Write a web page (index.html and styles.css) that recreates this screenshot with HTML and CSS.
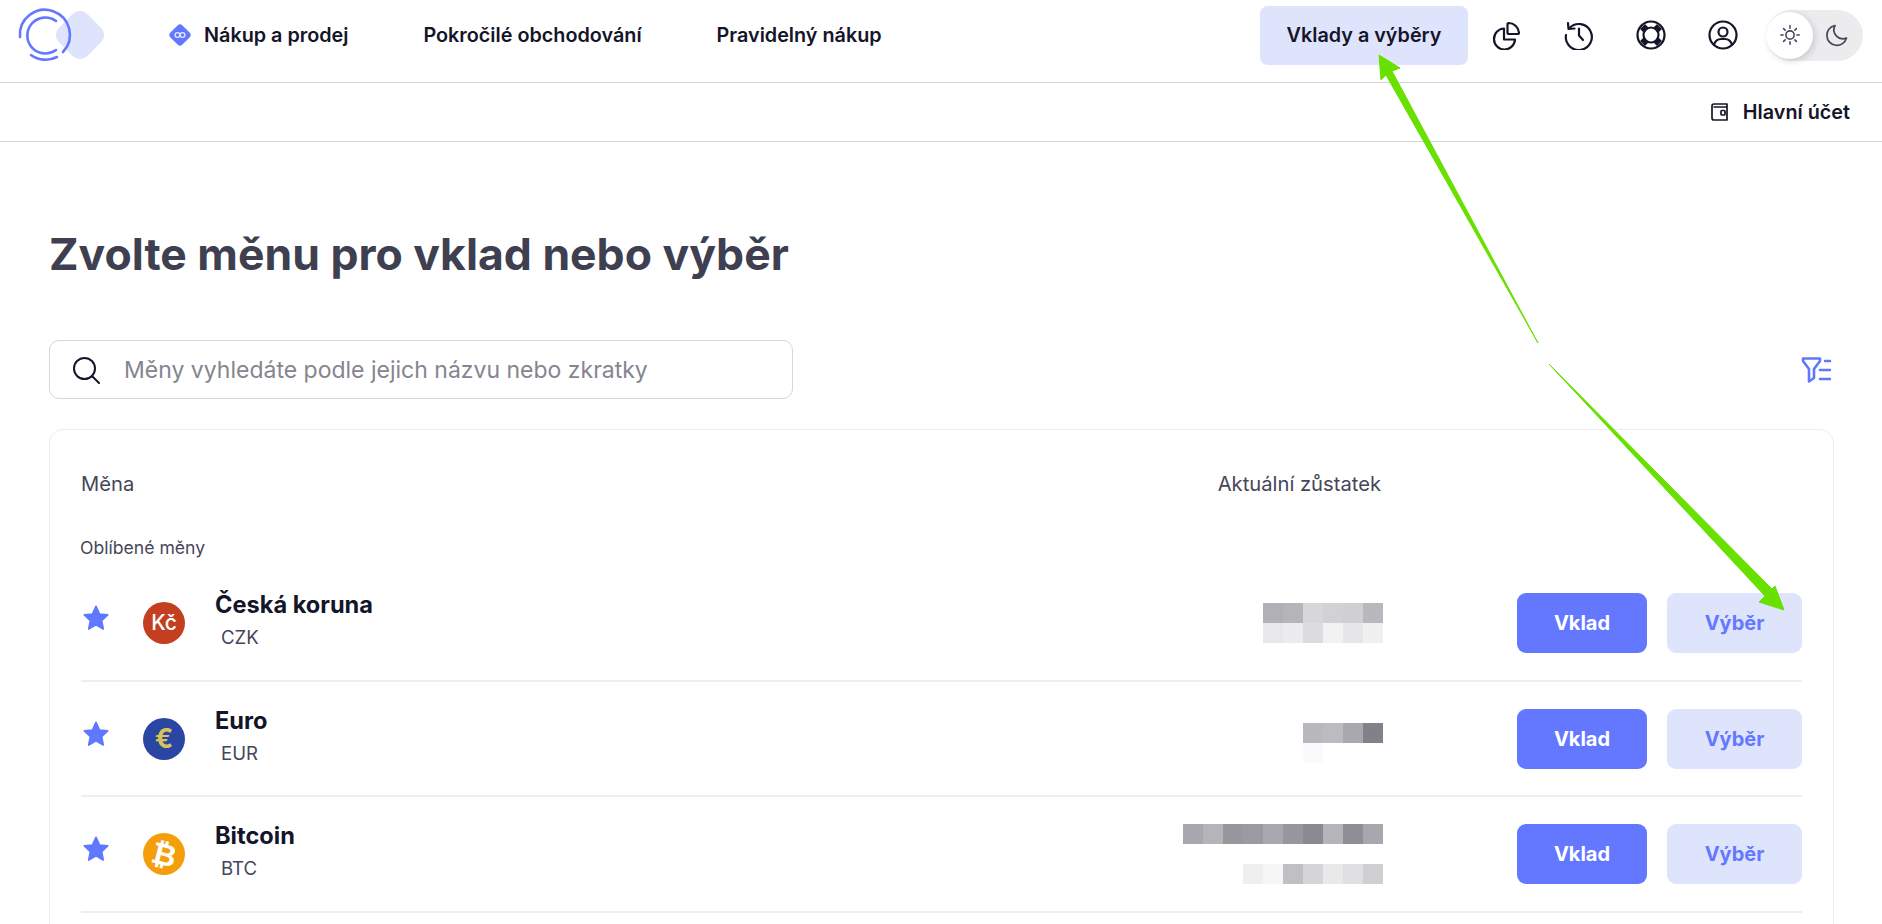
FILE: index.html
```html
<!DOCTYPE html>
<html lang="cs">
<head>
<meta charset="utf-8">
<title>Vklady a výběry</title>
<link rel="stylesheet" href="styles.css">
</head>
<body>
<header class="topbar">
  <svg class="logo" viewBox="0 0 110 70" width="110" height="70" aria-hidden="true">
    <rect class="logo-back" x="60" y="15" width="40" height="40" rx="10" transform="rotate(45 80 35)"/>
    <path class="logo-ring" d="M20 37 A25 25 0 1 1 63 52"/>
    <path class="logo-ring" d="M31 55 A25 25 0 0 0 57 57"/>
    <path class="logo-ring" d="M56 21 A18 18 0 1 0 56 50"/>
  </svg>
  <nav class="nav">
    <a class="nav-item nav-active">
      <svg class="nav-mark" viewBox="0 0 26 26" width="26" height="26" aria-hidden="true">
        <rect class="nav-mark-bg" x="4.5" y="4.5" width="17" height="17" rx="3.5" transform="rotate(45 13 13)"/>
        <circle class="nav-mark-line" cx="10.5" cy="13" r="2.4"/>
        <circle class="nav-mark-line" cx="15.5" cy="13" r="2.4"/>
      </svg>
      Nákup a prodej
    </a>
    <a class="nav-item">Pokročilé obchodování</a>
    <a class="nav-item">Pravidelný nákup</a>
  </nav>
  <div class="top-actions">
    <a class="deposit-link">Vklady a výběry</a>
    <div class="icon-row">
      <svg class="top-icon" viewBox="0 0 30 30" width="30" height="30" aria-hidden="true">
        <path d="M12 8.5 A10.5 10.5 0 1 0 23 19.5 H12 Z"/>
        <path d="M16.5 3 A10.5 10.5 0 0 1 27 12.5 Q27 14 25.5 14 H17 Q15.5 14 15.5 12.5 V4 Q15.5 3 16.5 3 Z"/>
      </svg>
      <svg class="top-icon" viewBox="0 0 30 30" width="30" height="30" aria-hidden="true">
        <path d="M5.5 8 A13 13 0 1 1 2 15"/>
        <path d="M4 3 L4.5 9 L10.5 8.5"/>
        <path d="M15 8.5 V15.5 L19 20"/>
      </svg>
      <svg class="top-icon" viewBox="0 0 30 30" width="30" height="30" aria-hidden="true">
        <circle cx="15" cy="15" r="13.5"/>
        <circle cx="15" cy="15" r="7.5"/>
        <path class="buoy" d="M6.5 6.5 L10 10 M23.5 6.5 L20 10 M6.5 23.5 L10 20 M23.5 23.5 L20 20"/>
      </svg>
      <svg class="top-icon" viewBox="0 0 30 30" width="30" height="30" aria-hidden="true">
        <circle cx="15" cy="15" r="13.5"/>
        <circle cx="15" cy="12" r="4.5"/>
        <path d="M6 24.5 Q8 19 13 19 H17 Q22 19 24 24.5"/>
      </svg>
    </div>
    <div class="theme-toggle">
      <span class="theme-knob">
        <svg class="sun" viewBox="0 0 24 24" width="22" height="22" aria-hidden="true">
          <circle cx="12" cy="12" r="4.5"/>
          <path d="M12 2 V4.5 M12 19.5 V22 M2 12 H4.5 M19.5 12 H22 M5 5 L6.7 6.7 M17.3 17.3 L19 19 M19 5 L17.3 6.7 M6.7 17.3 L5 19"/>
        </svg>
      </span>
      <svg class="moon" viewBox="0 0 24 24" width="24" height="24" aria-hidden="true">
        <path d="M10 2.5 A10 10 0 1 0 21.5 15 A9 9 0 0 1 10 2.5 Z"/>
      </svg>
    </div>
  </div>
</header>

<div class="subbar">
  <a class="account">
    <svg class="wallet" viewBox="0 0 20 20" width="20" height="20" aria-hidden="true">
      <path d="M17 5 V2 H4 Q2 2 2 4 V16 Q2 18 4 18 H17 V5 H3.5"/>
      <rect x="11" y="8.5" width="4" height="4.5" rx="1"/>
    </svg>
    Hlavní účet
  </a>
</div>

<main class="page">
  <h1 class="title">Zvolte měnu pro vklad nebo výběr</h1>

  <div class="tools">
    <label class="search">
      <svg class="search-icon" viewBox="0 0 28 28" width="28" height="28" aria-hidden="true">
        <circle cx="12.5" cy="12.5" r="10.5"/>
        <path d="M20.5 20.5 L27 27"/>
      </svg>
      <input class="search-input" type="text" placeholder="Měny vyhledáte podle jejich názvu nebo zkratky">
    </label>
    <svg class="filter" viewBox="0 0 30 26" width="30" height="26" aria-hidden="true">
      <path d="M2 1.5 H19 V4 L13 12 V21 L8 24.5 V12 L2 4 Z"/>
      <path d="M24 4 H29 M19 13 H29 M19 22 H29"/>
    </svg>
  </div>

  <section class="card">
    <div class="card-head">
      <span>Měna</span>
      <span class="head-balance">Aktuální zůstatek</span>
    </div>
    <div class="group-label">Oblíbené měny</div>

    <div class="row">
      <svg class="star" viewBox="0 0 24 24" width="28" height="28" aria-hidden="true"><path d="M12 2 L15 8.6 L22 9.4 L16.8 14.2 L18.2 21.4 L12 17.8 L5.8 21.4 L7.2 14.2 L2 9.4 L9 8.6 Z"/></svg>
      <span class="coin coin-czk">Kč</span>
      <div class="cur"><div class="cur-name">Česká koruna</div><div class="cur-code">CZK</div></div>
      <div class="bal">
        <div class="strip"><i class="g-b1"></i><i class="g-b5"></i><i class="g-d7"></i><i class="g-d2"></i><i class="g-d0"></i><i class="g-b9"></i></div>
        <div class="strip"><i class="g-e8"></i><i class="g-ec"></i><i class="g-dc"></i><i class="g-f2"></i><i class="g-e6"></i><i class="g-f0"></i></div>
      </div>
      <div class="act"><button class="btn btn-main">Vklad</button><button class="btn btn-soft">Výběr</button></div>
    </div>

    <div class="row">
      <svg class="star" viewBox="0 0 24 24" width="28" height="28" aria-hidden="true"><path d="M12 2 L15 8.6 L22 9.4 L16.8 14.2 L18.2 21.4 L12 17.8 L5.8 21.4 L7.2 14.2 L2 9.4 L9 8.6 Z"/></svg>
      <span class="coin coin-eur">€</span>
      <div class="cur"><div class="cur-name">Euro</div><div class="cur-code">EUR</div></div>
      <div class="bal bal-low">
        <div class="strip"><i class="g-b9"></i><i class="g-bc"></i><i class="g-a9"></i><i class="g-82"></i></div>
        <div class="strip"><i class="g-fa"></i><i></i><i></i><i></i></div>
      </div>
      <div class="act"><button class="btn btn-main">Vklad</button><button class="btn btn-soft">Výběr</button></div>
    </div>

    <div class="row">
      <svg class="star" viewBox="0 0 24 24" width="28" height="28" aria-hidden="true"><path d="M12 2 L15 8.6 L22 9.4 L16.8 14.2 L18.2 21.4 L12 17.8 L5.8 21.4 L7.2 14.2 L2 9.4 L9 8.6 Z"/></svg>
      <span class="coin coin-btc"><span class="btc-glyph">₿</span></span>
      <div class="cur"><div class="cur-name">Bitcoin</div><div class="cur-code">BTC</div></div>
      <div class="bal bal-wide">
        <div class="strip"><i class="g-a8"></i><i class="g-b5"></i><i class="g-98"></i><i class="g-9b"></i><i class="g-a9"></i><i class="g-98"></i><i class="g-8b"></i><i class="g-b5"></i><i class="g-8f"></i><i class="g-a8"></i></div>
        <div class="strip"><i class="g-ef"></i><i class="g-f6"></i><i class="g-c0"></i><i class="g-d5"></i><i class="g-e9"></i><i class="g-e0"></i><i class="g-d0"></i></div>
      </div>
      <div class="act"><button class="btn btn-main">Vklad</button><button class="btn btn-soft">Výběr</button></div>
    </div>

    <div class="group-label group-next">Ostatní měny</div>
  </section>
</main>

<svg class="arrows" viewBox="0 0 1882 924" width="1882" height="924" aria-hidden="true">
  <polygon points="1379,55 1400,68 1392,71 1538,343 1386,75 1381,80"/>
  <polygon points="1549,364 1772,589 1775,586 1784,610 1759,602 1765,596"/>
</svg>
</body>
</html>
```

FILE: styles.css
```css
* { box-sizing: border-box; }

html, body {
  margin: 0;
  height: 924px;
  overflow: hidden;
  background: #fff;
}

body {
  position: relative;
  font-family: Inter, "Liberation Sans", sans-serif;
  color: #141529;
}

.topbar {
  display: flex;
  align-items: center;
  height: 83px;
  padding: 0 19px 12px 0;
  border-bottom: 1px solid #d6d6d8;
}

.logo { flex: none; }
.logo-back { fill: #dfe4fd; }
.logo-ring { fill: none; stroke: #6478ff; stroke-width: 2.6; stroke-linecap: round; }

.nav {
  display: flex;
  align-items: center;
  gap: 75px;
  margin-left: 57px;
  font-size: 19.8px;
  font-weight: 600;
}

.nav-item {
  display: flex;
  align-items: center;
  gap: 11px;
  white-space: nowrap;
}

.nav-mark { flex: none; }
.nav-mark-bg { fill: #6478ff; }
.nav-mark-line { fill: none; stroke: #e6e9ff; stroke-width: 1.3; }

.top-actions {
  display: flex;
  align-items: center;
  margin-left: auto;
}

.deposit-link {
  display: flex;
  align-items: center;
  justify-content: center;
  width: 208px;
  height: 59px;
  border-radius: 8px;
  background: #dfe4fd;
  font-size: 19.8px;
  font-weight: 600;
}

.icon-row {
  display: flex;
  gap: 42px;
  margin-left: 24px;
}

.top-icon {
  fill: none;
  stroke: #141529;
  stroke-width: 2.2;
  stroke-linecap: round;
  stroke-linejoin: round;
}

.buoy { stroke-width: 7; stroke-linecap: butt; }

.theme-toggle {
  display: flex;
  align-items: center;
  width: 97px;
  height: 51px;
  margin-left: 28px;
  border-radius: 26px;
  background: #ececef;
}

.theme-knob {
  display: flex;
  align-items: center;
  justify-content: center;
  width: 47px;
  height: 47px;
  border-radius: 50%;
  background: #fff;
  box-shadow: 2px 2px 6px rgba(20, 21, 41, .16);
}

.sun, .moon {
  fill: none;
  stroke: #45465a;
  stroke-width: 1.7;
  stroke-linecap: round;
  stroke-linejoin: round;
}

.moon { margin-left: 12px; }

.subbar {
  display: flex;
  align-items: center;
  justify-content: flex-end;
  height: 59px;
  padding-right: 32px;
  border-bottom: 1px solid #d6d6d8;
}

.account {
  display: flex;
  align-items: center;
  gap: 13px;
  font-size: 19.8px;
  font-weight: 600;
}

.wallet {
  fill: none;
  stroke: #141529;
  stroke-width: 1.7;
  stroke-linejoin: round;
}

.page { padding: 0 48px 0 49px; }

.title {
  margin: 87px 0 0;
  height: 50px;
  font-size: 44.5px;
  line-height: 50px;
  font-weight: 700;
  color: #3e3f50;
}

.tools {
  display: flex;
  align-items: center;
  justify-content: space-between;
  margin-top: 61px;
}

.search {
  display: flex;
  align-items: center;
  gap: 24px;
  width: 744px;
  height: 59px;
  padding-left: 22px;
  border: 1px solid #d6d6d8;
  border-radius: 10px;
}

.search-icon {
  flex: none;
  fill: none;
  stroke: #141529;
  stroke-width: 2;
  stroke-linecap: round;
}

.search-input {
  flex: 1;
  min-width: 0;
  border: 0;
  outline: 0;
  padding: 0;
  background: transparent;
  font-family: inherit;
  font-size: 23px;
  color: #141529;
}

.search-input::placeholder { color: #85858f; opacity: 1; }

.filter {
  flex: none;
  margin-right: 3px;
  fill: none;
  stroke: #5f78ff;
  stroke-width: 2.6;
  stroke-linecap: round;
  stroke-linejoin: round;
}

.card {
  margin-top: 30px;
  padding: 0 31px;
  border: 1px solid #ececee;
  border-radius: 14px;
}

.card-head {
  display: flex;
  justify-content: space-between;
  padding: 42px 0 0;
  font-size: 20.2px;
  line-height: 24px;
  color: #45465a;
}

.head-balance { margin-right: 421px; }

.group-label {
  margin-top: 40px;
  margin-bottom: 6px;
  margin-left: -1px;
  font-size: 17.6px;
  line-height: 24px;
  color: #45465a;
}

.group-next { margin-top: 7px; margin-left: 0; }

.row {
  display: flex;
  align-items: center;
  height: 115.7px;
  border-bottom: 2px solid #eeeeef;
}

.star {
  flex: none;
  margin: 0 32px 10px 1px;
  fill: #5f78ff;
  stroke: #5f78ff;
  stroke-width: 1.5;
  stroke-linejoin: round;
}

.coin {
  flex: none;
  display: flex;
  align-items: center;
  justify-content: center;
  width: 42px;
  height: 42px;
  margin-left: 1px;
  border-radius: 50%;
  color: #fff;
  font-size: 21px;
  font-weight: 500;
}

.coin-czk { background: #c33f1f; }
.coin-eur { background: #2b45a3; color: #d8c25a; font-size: 27px; font-weight: 700; }
.coin-btc { background: #f59e0b; font-family: "DejaVu Sans", sans-serif; font-size: 30px; font-weight: 700; }
.btc-glyph { display: block; transform: rotate(14deg); }

.cur { flex: 1; margin: 0 0 6px 30px; }
.cur-name { font-size: 23.6px; line-height: 30px; font-weight: 700; margin-top: -2px; }
.cur-code { margin-top: 6px; padding-left: 6px; font-size: 18.6px; line-height: 22px; color: #45465a; }

.bal {
  display: flex;
  flex-direction: column;
  align-items: flex-end;
  margin-right: 134px;
}

.bal-low { margin-top: 8px; }
.bal-wide { gap: 20px; }

.strip { display: flex; }
.strip i { display: block; width: 20px; height: 20px; }

.g-82 { background: #82818a; }
.g-8b { background: #8b8a93; }
.g-8f { background: #8f8e96; }
.g-98 { background: #98979e; }
.g-9b { background: #9b9aa1; }
.g-a8 { background: #a8a7ad; }
.g-a9 { background: #a9a8ae; }
.g-b1 { background: #b1b0b6; }
.g-b5 { background: #b5b4b9; }
.g-b9 { background: #b9b8bd; }
.g-bc { background: #bcbbc0; }
.g-c0 { background: #c0bfc4; }
.g-d0 { background: #d0d0d3; }
.g-d2 { background: #d2d2d5; }
.g-d5 { background: #d5d5d8; }
.g-d7 { background: #d7d7da; }
.g-dc { background: #dcdcde; }
.g-e0 { background: #e0e0e2; }
.g-e6 { background: #e6e6e8; }
.g-e8 { background: #e8e8ea; }
.g-e9 { background: #e9e9ea; }
.g-ec { background: #ececee; }
.g-ef { background: #efeff0; }
.g-f0 { background: #f0f0f0; }
.g-f2 { background: #f2f2f3; }
.g-f6 { background: #f6f6f7; }
.g-fa { background: #fafbfd; }

.act { display: flex; gap: 20px; }

.btn {
  height: 60px;
  border: 0;
  border-radius: 9px;
  font-family: inherit;
  font-size: 20px;
  font-weight: 700;
}

.btn-main { width: 130px; background: #6478ff; color: #fff; }
.btn-soft { width: 135px; background: #dfe4fd; color: #6478ff; }

.arrows {
  position: absolute;
  top: 0;
  left: 0;
  pointer-events: none;
}

.arrows polygon {
  fill: #68e000;
  stroke: #68e000;
  stroke-width: 1;
  stroke-linejoin: round;
}
```
